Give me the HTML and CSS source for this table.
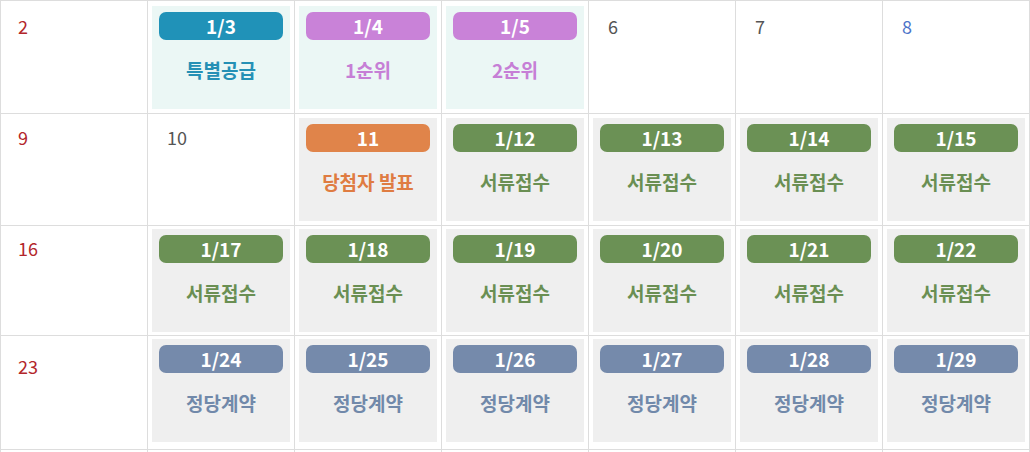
FILE: index.html
```html
<!DOCTYPE HTML>
<html>
<head>
  <title>청약 일정</title>
  <meta charset="UTF-8">
  <link rel="stylesheet" href="styles.css">
</head>
<body>
  <div class="calendar">
    <div class="week week--first">
      <div class="day sun"><span class="day-num">2</span></div>
      <div class="day">
        <div class="event event--special">
          <div class="event-date">1/3</div>
          <div class="event-name">특별공급</div>
        </div>
      </div>
      <div class="day">
        <div class="event event--rank">
          <div class="event-date">1/4</div>
          <div class="event-name">1순위</div>
        </div>
      </div>
      <div class="day">
        <div class="event event--rank">
          <div class="event-date">1/5</div>
          <div class="event-name">2순위</div>
        </div>
      </div>
      <div class="day"><span class="day-num">6</span></div>
      <div class="day"><span class="day-num">7</span></div>
      <div class="day sat"><span class="day-num">8</span></div>
    </div>

    <div class="week">
      <div class="day sun"><span class="day-num">9</span></div>
      <div class="day"><span class="day-num">10</span></div>
      <div class="day">
        <div class="event event--winner">
          <div class="event-date">11</div>
          <div class="event-name">당첨자 발표</div>
        </div>
      </div>
      <div class="day">
        <div class="event event--docs">
          <div class="event-date">1/12</div>
          <div class="event-name">서류접수</div>
        </div>
      </div>
      <div class="day">
        <div class="event event--docs">
          <div class="event-date">1/13</div>
          <div class="event-name">서류접수</div>
        </div>
      </div>
      <div class="day">
        <div class="event event--docs">
          <div class="event-date">1/14</div>
          <div class="event-name">서류접수</div>
        </div>
      </div>
      <div class="day">
        <div class="event event--docs">
          <div class="event-date">1/15</div>
          <div class="event-name">서류접수</div>
        </div>
      </div>
    </div>

    <div class="week week--short">
      <div class="day sun"><span class="day-num">16</span></div>
      <div class="day">
        <div class="event event--docs">
          <div class="event-date">1/17</div>
          <div class="event-name">서류접수</div>
        </div>
      </div>
      <div class="day">
        <div class="event event--docs">
          <div class="event-date">1/18</div>
          <div class="event-name">서류접수</div>
        </div>
      </div>
      <div class="day">
        <div class="event event--docs">
          <div class="event-date">1/19</div>
          <div class="event-name">서류접수</div>
        </div>
      </div>
      <div class="day">
        <div class="event event--docs">
          <div class="event-date">1/20</div>
          <div class="event-name">서류접수</div>
        </div>
      </div>
      <div class="day">
        <div class="event event--docs">
          <div class="event-date">1/21</div>
          <div class="event-name">서류접수</div>
        </div>
      </div>
      <div class="day">
        <div class="event event--docs">
          <div class="event-date">1/22</div>
          <div class="event-name">서류접수</div>
        </div>
      </div>
    </div>

    <div class="week week--tall">
      <div class="day sun"><span class="day-num">23</span></div>
      <div class="day">
        <div class="event event--contract">
          <div class="event-date">1/24</div>
          <div class="event-name">정당계약</div>
        </div>
      </div>
      <div class="day">
        <div class="event event--contract">
          <div class="event-date">1/25</div>
          <div class="event-name">정당계약</div>
        </div>
      </div>
      <div class="day">
        <div class="event event--contract">
          <div class="event-date">1/26</div>
          <div class="event-name">정당계약</div>
        </div>
      </div>
      <div class="day">
        <div class="event event--contract">
          <div class="event-date">1/27</div>
          <div class="event-name">정당계약</div>
        </div>
      </div>
      <div class="day">
        <div class="event event--contract">
          <div class="event-date">1/28</div>
          <div class="event-name">정당계약</div>
        </div>
      </div>
      <div class="day">
        <div class="event event--contract">
          <div class="event-date">1/29</div>
          <div class="event-name">정당계약</div>
        </div>
      </div>
    </div>

    <!-- next week, below the fold -->
    <div class="week">
      <div class="day sun"></div>
      <div class="day"></div>
      <div class="day"></div>
      <div class="day"></div>
      <div class="day"></div>
      <div class="day"></div>
      <div class="day sat"></div>
    </div>
  </div>
</body>
</html>
```

FILE: styles.css
```css
* {
  box-sizing: border-box;
}

html,
body{
  margin: 0;
  background: white;
  font-family: "Noto Sans CJK KR", "Noto Sans", sans-serif;
}

.calendar{
  display: grid;
  grid-template-columns: repeat(7, 147px);
  width: 1030px;
  border-top: 1px solid #ddd;
  border-left: 1px solid #ddd;
}

.week{
  display: contents;
}

.day{
  height: 112px;
  border-right: 1px solid #ddd;
  border-bottom: 1px solid #ddd;
  padding: 4px;
}

.day-num{
  display: block;
  padding: 7px 0 0 15px;
  font-size: 18px;
  line-height: 24px;
  color: #555;
}

.sun .day-num{
  padding-left: 13px;
  color: #b3262b;
}

.sat .day-num{
  color: #4d74c9;
}

.week--first .day{
  height: 113px;
  padding-top: 5px;
}
.week--first .day-num{
  padding-top: 8px;
}

.week--short .day{
  height: 110px;
  padding-top: 3px;
}
.week--short .day-num{
  padding-top: 7px;
}

.week--tall .day{
  height: 114px;
  padding-top: 3px;
}
.week--tall .day-num{
  padding-top: 15px;
}

.event{
  height: 103px;
  padding: 6px 7px 0;
  background: #efefef;
  text-align: center;
}

.event-date{
  height: 28px;
  border-radius: 7px;
  background: #777;
  color: white;
  font-size: 19px;
  font-weight: 700;
  line-height: 28px;
}

.event-name{
  margin-top: 17px;
  font-size: 19px;
  font-weight: 700;
  line-height: 26px;
}

/* event types */
.event--special,
.event--rank{
  background: #ebf7f5;
}

.event--special .event-date{
  background: #2092b8;
}
.event--special .event-name{
  color: #2590b5;
}

.event--rank .event-date{
  background: #c982d8;
}
.event--rank .event-name{
  color: #c67fd6;
}

.event--winner .event-date{
  background: #e0844a;
}
.event--winner .event-name{
  color: #df7c42;
}

.event--docs .event-date{
  background: #6b9155;
}
.event--docs .event-name{
  color: #6a8f53;
}

.event--contract .event-date{
  background: #758aab;
}
.event--contract .event-name{
  color: #7189aa;
}
```
